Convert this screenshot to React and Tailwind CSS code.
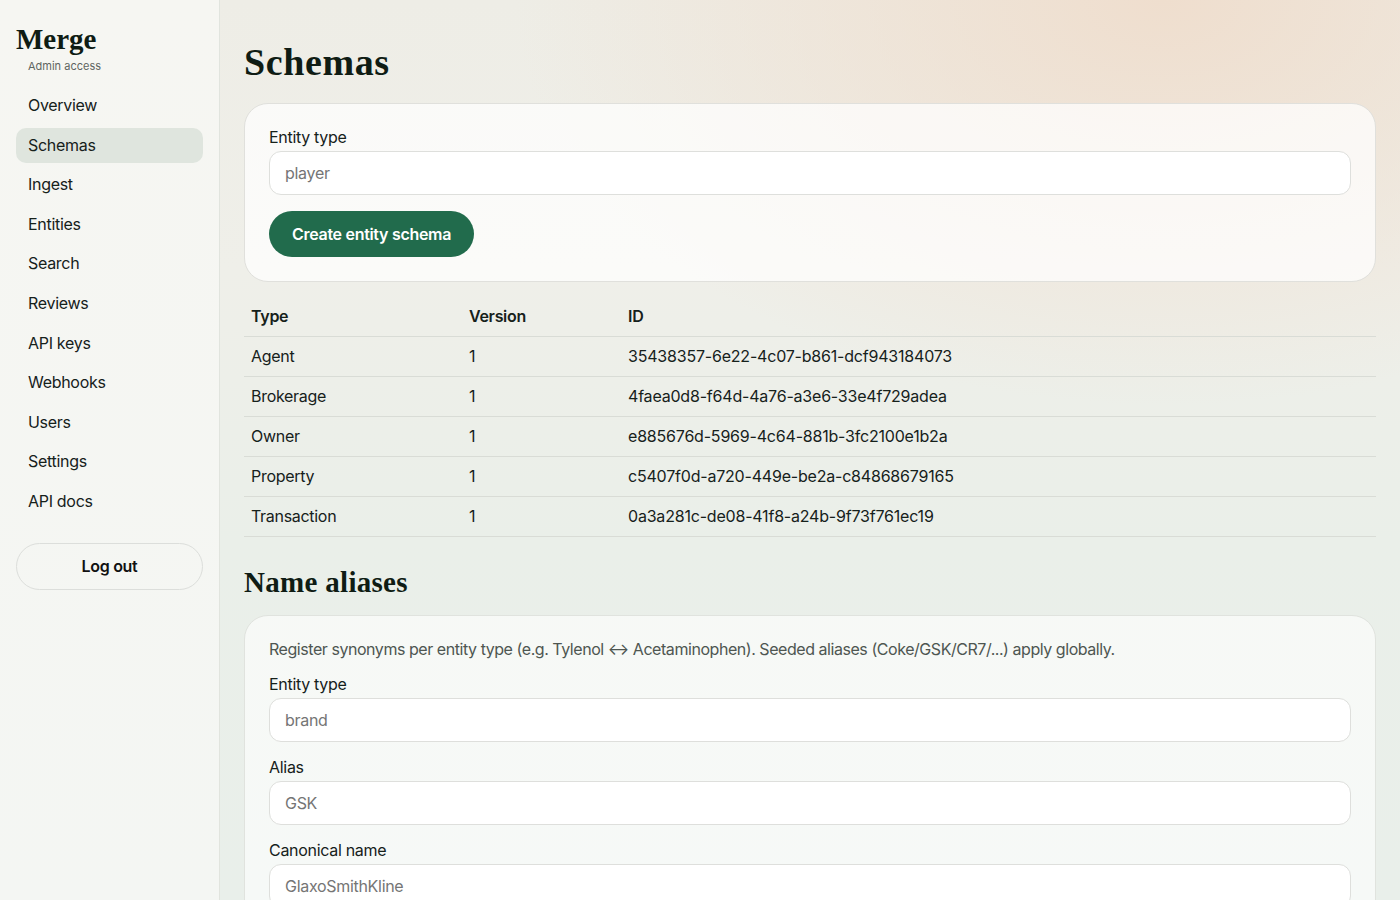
import React from "react";

const nav = ["Overview","Schemas","Ingest","Entities","Search","Reviews","API keys","Webhooks","Users","Settings","API docs"];
const rows = [
  ["Agent","1","35438357-6e22-4c07-b861-dcf943184073"],
  ["Brokerage","1","4faea0d8-f64d-4a76-a3e6-33e4f729adea"],
  ["Owner","1","e885676d-5969-4c64-881b-3fc2100e1b2a"],
  ["Property","1","c5407f0d-a720-449e-be2a-c84868679165"],
  ["Transaction","1","0a3a281c-de08-41f8-a24b-9f73f761ec19"],
];

function Field({ label, placeholder }) {
  return (
    <div className="flex flex-col">
      <label className="mb-[4px] text-[16px] leading-[20px] text-[#16211b]">{label}</label>
      <input
        placeholder={placeholder}
        className="h-[44px] w-full rounded-[12px] border border-[#dedfdc] bg-white px-[15px] text-[16px] tracking-[-0.3px] text-[#1a1a1a] placeholder:text-[#757575] outline-none"
      />
    </div>
  );
}

export default function App() {
  return (
    <div className="flex h-[900px] w-[1400px] overflow-hidden font-['Inter','Liberation_Sans',sans-serif] tracking-[-0.3px] text-[#16211b]">
      <aside className="flex w-[220px] shrink-0 flex-col border-r border-[#e1e4de] bg-[linear-gradient(180deg,#f6f6f2_0%,#f4f6f3_100%)] px-[16px] pt-[22px]">
        <div className="font-['Liberation_Serif',serif] text-[29px] font-bold leading-[34px] tracking-[0px] text-[#0f1c14]">Merge</div>
        <div className="mt-[3px] pl-[12px] text-[11px] leading-[14px] tracking-[0px] text-[#5f6561]">Admin access</div>
        <nav className="mt-[15px] flex flex-col gap-[4px]">
          {nav.map((n) => (
            <div
              key={n}
              className={
                "h-[35.6px] rounded-[10px] px-[12px] text-[16px] leading-[35.6px] " +
                (n === "Schemas" ? "bg-[#dfe5de]" : "")
              }
            >
              {n}
            </div>
          ))}
        </nav>
        <button className="mt-[23px] h-[47px] w-full rounded-full border border-[#dcdedb] text-[16px] font-semibold text-[#111]">
          Log out
        </button>
      </aside>

      <main className="relative flex-1 overflow-hidden bg-[radial-gradient(ellipse_55%_45%_at_80%_0%,rgba(239,222,206,1),rgba(239,222,206,0)_100%),linear-gradient(180deg,#eeede6_0%,#efefe9_30%,#eaefe9_60%,#e9efea_100%)] px-[24px] pt-[40px]">
        <h1 className="font-['Liberation_Serif',serif] text-[38px] font-bold leading-[44px] tracking-[0.6px] text-[#0f1c14]">Schemas</h1>

        <div className="mt-[19px] rounded-[24px] border border-[#e0e0dc] bg-[rgba(255,255,255,0.72)] px-[24px] pt-[23px] pb-[24px]">
          <Field label="Entity type" placeholder="player" />
          <button className="mt-[16px] h-[46px] rounded-full bg-[#216b4c] px-[23px] text-[16px] font-semibold text-white">
            Create entity schema
          </button>
        </div>

        <table className="mt-[15px] w-full border-collapse text-[16px]">
          <thead>
            <tr className="border-b border-[#d9dcd6]">
              <th className="h-[39px] w-[218px] px-[7px] text-left font-semibold">Type</th>
              <th className="h-[39px] w-[159px] px-[7px] text-left font-semibold">Version</th>
              <th className="h-[39px] px-[7px] text-left font-semibold">ID</th>
            </tr>
          </thead>
          <tbody>
            {rows.map((r) => (
              <tr key={r[0]} className="border-b border-[#d9dcd6]">
                <td className="h-[40px] px-[7px]">{r[0]}</td>
                <td className="h-[40px] px-[7px]">{r[1]}</td>
                <td className="h-[40px] px-[7px] tracking-[-0.2px]">{r[2]}</td>
              </tr>
            ))}
          </tbody>
        </table>

        <h2 className="mt-[27px] font-['Liberation_Serif',serif] text-[29px] font-bold leading-[36px] tracking-[0.3px] text-[#0f1c14]">Name aliases</h2>

        <div className="mt-[15px] rounded-[24px] border border-[#e0e3de] bg-[rgba(255,255,255,0.6)] px-[24px] pt-[23px] pb-[24px]">
          <p className="text-[16px] leading-[20px] tracking-[-0.45px] text-[#4e5651]">
            Register synonyms per entity type (e.g. Tylenol ↔ Acetaminophen). Seeded aliases (Coke/GSK/CR7/...) apply globally.
          </p>
          <div className="mt-[15px] flex flex-col gap-[15px]">
            <Field label="Entity type" placeholder="brand" />
            <Field label="Alias" placeholder="GSK" />
            <Field label="Canonical name" placeholder="GlaxoSmithKline" />
          </div>
        </div>
      </main>
    </div>
  );
}
